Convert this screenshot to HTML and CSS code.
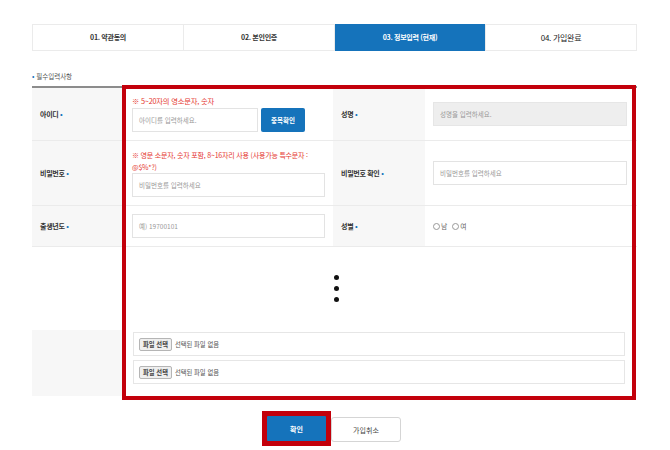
FILE: index.html
```html
<html lang="ko">
<head>
    <meta charset="UTF-8">
    <meta name="viewport" content="width=device-width, initial-scale=1.0">
    <title>회원가입 - 정보입력</title>
    <link rel="stylesheet" href="styles.css">
</head>
<body>
<div class="page">

    <div class="steps">
        <div class="step">01. 약관동의</div>
        <div class="step">02. 본인인증</div>
        <div class="step current">03. 정보입력 (현재)</div>
        <div class="step last">04. 가입완료</div>
    </div>

    <p class="notice"><span class="req">•</span> 필수입력사항</p>

    <div class="form">
        <!-- 1행 -->
        <div class="th">아이디 <span class="req">•</span></div>
        <div class="td stack">
            <p class="hint">※ 5~20자의 영소문자, 숫자</p>
            <div class="id-line">
                <div class="field short">아이디를 입력하세요.</div>
                <button class="btn-check">중복확인</button>
            </div>
        </div>
        <div class="th">성명 <span class="req">•</span></div>
        <div class="td right">
            <div class="field wide disabled">성명을 입력하세요.</div>
        </div>

        <!-- 2행 -->
        <div class="th">비밀번호 <span class="req">•</span></div>
        <div class="td stack">
            <p class="hint two">※ 영문 소문자, 숫자 포함, 8~16자리 사용 (사용가능 특수문자 :<br>@$%*?)</p>
            <div class="field">비밀번호를 입력하세요</div>
        </div>
        <div class="th">비밀번호 확인 <span class="req">•</span></div>
        <div class="td right">
            <div class="field wide">비밀번호를 입력하세요</div>
        </div>

        <!-- 3행 -->
        <div class="th row3">출생년도 <span class="req">•</span></div>
        <div class="td row3">
            <div class="field">예) 19700101</div>
        </div>
        <div class="th row3">성별 <span class="req">•</span></div>
        <div class="td right row3">
            <label class="radio"><span class="circle"></span>남</label>
            <label class="radio"><span class="circle"></span>여</label>
        </div>

        <!-- 생략 -->
        <div class="skip">
            <span class="dot"></span>
            <span class="dot"></span>
            <span class="dot"></span>
        </div>

        <!-- 첨부파일 -->
        <div class="th files-th"></div>
        <div class="td files">
            <div class="file-box"><span class="file-btn">파일 선택</span> 선택된 파일 없음</div>
            <div class="file-box"><span class="file-btn">파일 선택</span> 선택된 파일 없음</div>
        </div>
    </div>

    <div class="actions">
        <span class="ok-frame"><button class="btn-ok">확인</button></span>
        <button class="btn-cancel">가입취소</button>
    </div>

    <div class="highlight"></div>
</div>
</body>
</html>
```

FILE: styles.css
```css
body {
    margin: 0;
    background-color: #fff;
    font-family: "Noto Sans CJK KR", "Noto Sans", sans-serif;
    color: #333;
}
.page {
    position: relative;
    padding: 24px 33px 0 32px;
}
.steps {
    display: flex;
    border: 1px solid #ebebeb;
    height: 25px;
}
.step {
    flex: 1;
    text-align: center;
    line-height: 25px;
    font-size: 7px;
    font-weight: bold;
    letter-spacing: -0.3px;
    border-left: 1px solid #ebebeb;
}
.step:first-child {
    border-left: none;
}
.step.current {
    background-color: #1573bb;
    color: #fff;
    margin: -1px 0;
    line-height: 27px;
}
.step.last {
    font-size: 8px;
    font-weight: normal;
    color: #222;
}
.notice {
    margin: 20px 0 5px;
    line-height: 10px;
    font-size: 6.5px;
    color: #555;
}
.req {
    color: #1573bb;
    font-size: 7px;
}
.form {
    display: grid;
    grid-template-columns: 91px 210px 92px 1fr;
    border-top: 2px solid #8c8c8c;
}
.th {
    background-color: #f7f7f7;
    border-bottom: 1px solid #ebebeb;
    display: flex;
    align-items: center;
    padding-left: 8px;
    font-size: 7px;
    font-weight: bold;
    letter-spacing: -0.3px;
    white-space: pre;
}
.td {
    border-bottom: 1px solid #ebebeb;
    padding: 0 8px 0 9px;
    display: flex;
    align-items: center;
}
.td.stack {
    flex-direction: column;
    align-items: flex-start;
    padding-top: 8px;
    padding-bottom: 8px;
}
.td.right {
    padding: 0 10px 0 8px;
}
.row3 {
    height: 40px;
}
.hint {
    margin: 0 0 2px;
    line-height: 10px;
    font-size: 7.3px;
    color: #e5372f;
    letter-spacing: -0.2px;
    white-space: nowrap;
}
.hint.two {
    line-height: 12px;
    margin-bottom: 0;
    font-size: 7px;
}
.id-line {
    display: flex;
    gap: 3px;
}
.field {
    box-sizing: border-box;
    width: 193px;
    height: 24px;
    border: 1px solid #e3e3e3;
    padding-left: 6px;
    display: flex;
    align-items: center;
    font-size: 6.5px;
    color: #999;
}
.field.short {
    width: 126px;
}
.field.wide {
    width: 100%;
}
.field.disabled {
    background-color: #eeeeee;
    border-color: #e6e6e6;
}
.btn-check {
    width: 44px;
    height: 24px;
    border: none;
    border-radius: 2px;
    background-color: #1573bb;
    color: #fff;
    font-family: inherit;
    font-size: 6.5px;
    font-weight: bold;
    padding: 0;
}
.radio {
    display: flex;
    align-items: center;
    font-size: 6.8px;
    color: #666;
    margin-right: 5px;
}
.circle {
    width: 5px;
    height: 5px;
    border: 1px solid #999;
    border-radius: 50%;
    margin-right: 1px;
}
.skip {
    grid-column: 1 / -1;
    height: 83px;
    display: flex;
    flex-direction: column;
    align-items: center;
    justify-content: center;
    gap: 6px;
    padding-left: 3px;
}
.dot {
    width: 5px;
    height: 5px;
    border-radius: 50%;
    background-color: #111;
}
.files-th {
    height: 66px;
    border-bottom: none;
}
.td.files {
    grid-column: span 3;
    flex-direction: column;
    align-items: stretch;
    justify-content: flex-start;
    gap: 4px;
    padding: 2px 12px 0 10px;
    border-bottom: none;
}
.file-box {
    box-sizing: border-box;
    height: 24px;
    border: 1px solid #e6e6e6;
    display: flex;
    align-items: center;
    padding-left: 5px;
    font-size: 6.3px;
    color: #555;
}
.file-btn {
    background-color: #efefef;
    border: 1px solid #b5b5b5;
    border-radius: 2px;
    padding: 1px 3px;
    margin-right: 3px;
    font-weight: bold;
    color: #444;
}
.actions {
    display: flex;
    justify-content: center;
    align-items: flex-start;
    margin-top: 15px;
    padding-right: 6px;
}
.actions button {
    height: 25px;
    font-family: inherit;
    font-size: 7px;
    padding: 0;
    cursor: pointer;
}
.ok-frame {
    display: flex;
    padding: 5px;
    background-color: #c3000b;
}
.btn-ok {
    width: 59px;
    border: none;
    border-radius: 1px;
    background-color: #1573bb;
    color: #fff;
    font-weight: bold;
}
.btn-cancel {
    width: 70px;
    margin-top: 6px;
    background-color: #fff;
    border: 1px solid #d5d5d5;
    border-radius: 3px;
    color: #444;
}
.highlight {
    position: absolute;
    left: 122px;
    top: 85px;
    width: 514px;
    height: 315px;
    box-sizing: border-box;
    border: 4px solid #c3000b;
    pointer-events: none;
}
```
